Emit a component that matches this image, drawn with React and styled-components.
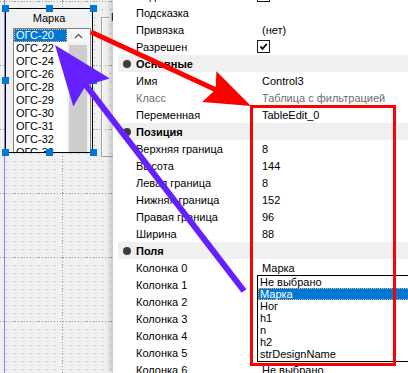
import React from 'react';
import styled, { createGlobalStyle } from 'styled-components';

const GlobalStyle = createGlobalStyle`
html, body {
  margin: 0;
  padding: 0;
}
body {
  width: 408px;
  height: 373px;
  overflow: hidden;
  background: #fff;
  color: #000;
  font-family: 'Liberation Sans', Arial, sans-serif;
  font-size: 11px;
}
`;

const marka = ['ОГС-20', 'ОГС-22', 'ОГС-24', 'ОГС-26', 'ОГС-28', 'ОГС-29', 'ОГС-30', 'ОГС-31', 'ОГС-32', 'ОГС-33'];

const props = [
  { label: 'Видимый', check: true },
  { label: 'Подсказка' },
  { label: 'Привязка', value: '(нет)' },
  { label: 'Разрешен', check: true },
  { section: 'Основные' },
  { label: 'Имя', value: 'Control3' },
  { label: 'Класс', value: 'Таблица с фильтрацией', muted: true },
  { label: 'Переменная', value: 'TableEdit_0' },
  { section: 'Позиция' },
  { label: 'Верхняя граница', value: '8' },
  { label: 'Высота', value: '144' },
  { label: 'Левая граница', value: '8' },
  { label: 'Нижняя граница', value: '152' },
  { label: 'Правая граница', value: '96' },
  { label: 'Ширина', value: '88' },
  { section: 'Поля' },
  { label: 'Колонка 0', value: 'Марка' },
  { label: 'Колонка 1' },
  { label: 'Колонка 2' },
  { label: 'Колонка 3' },
  { label: 'Колонка 4' },
  { label: 'Колонка 5' },
  { label: 'Колонка 6', value: 'Не выбрано' },
];

const fields = ['Не выбрано', 'Марка', 'Ног', 'h1', 'n', 'h2', 'strDesignName'];

// handle centres on the form, relative to its left edge
const handles = [
  [-3, 5], [41, 5], [85, 5],
  [-3, 77], [85, 77],
  [-3, 149], [41, 149], [85, 149],
];

const arrowPoints = ([sx, sy], [tx, ty], w, hl, hw, notch) => {
  const len = Math.hypot(tx - sx, ty - sy);
  const ux = (tx - sx) / len;
  const uy = (ty - sy) / len;
  const nx = -uy;
  const ny = ux;
  const bx = tx - hl * ux;
  const by = ty - hl * uy;
  const jx = bx + notch * ux;
  const jy = by + notch * uy;
  const pts = [
    [sx + (nx * w) / 2, sy + (ny * w) / 2],
    [jx + (nx * w) / 2, jy + (ny * w) / 2],
    [bx + nx * hw, by + ny * hw],
    [tx, ty],
    [bx - nx * hw, by - ny * hw],
    [jx - (nx * w) / 2, jy - (ny * w) / 2],
    [sx - (nx * w) / 2, sy - (ny * w) / 2],
  ];
  return pts.map((p) => p.map((v) => v.toFixed(1)).join(',')).join(' ');
};

const App = () => (
  <>
    <GlobalStyle />
    <Screen>
      <Canvas>
        <Form>
          <GroupBox>
            <GroupCaption>Р</GroupCaption>
          </GroupBox>
          <ListControl>
            <Caption>Марка</Caption>
            <ListBox>
              <Items>
                {marka.map((m, i) => (
                  <Item key={m} selected={i === 0}>
                    {m}
                  </Item>
                ))}
              </Items>
              <ScrollBar>
                <ScrollButton>
                  <svg width="9" height="6" viewBox="0 0 9 6">
                    <path d="M1 5 L4.5 1.5 L8 5" fill="none" stroke="#606060" strokeWidth="1.4" />
                  </svg>
                </ScrollButton>
                <Thumb />
              </ScrollBar>
            </ListBox>
          </ListControl>
          {handles.map(([x, y]) => (
            <Handle key={`${x}-${y}`} style={{ left: x, top: y }} />
          ))}
        </Form>
      </Canvas>

      <Panel>
        <Rows>
          {props.map((p, i) =>
            p.section ? (
              <Section key={i}>
                <Bullet />
                {p.section}
              </Section>
            ) : (
              <Row key={i}>
                <Label muted={p.muted}>{p.label}</Label>
                <Value muted={p.muted}>
                  {p.check ? (
                    <CheckBox>
                      <svg width="11" height="11" viewBox="0 0 11 11">
                        <path d="M2.5 5.5 L4.5 7.8 L8.8 3" fill="none" stroke="#000" strokeWidth="1.8" />
                      </svg>
                    </CheckBox>
                  ) : (
                    p.value
                  )}
                </Value>
              </Row>
            )
          )}
        </Rows>
      </Panel>

      <DropList>
        {fields.map((f, i) => (
          <DropItem key={f} selected={i === 1}>
            {f}
          </DropItem>
        ))}
      </DropList>

      <Highlight />

      <Arrows width="408" height="373" viewBox="0 0 408 373">
        <polygon points={arrowPoints([244, 291], [55, 45], 6, 60, 23, 8)} fill="#6420ff" />
        <polygon points={arrowPoints([91, 32], [251, 106], 5, 46, 17, 6)} fill="#ff0000" />
      </Arrows>
    </Screen>
  </>
);

const Screen = styled.div`
  position: relative;
  display: flex;
  width: 408px;
  height: 373px;
  overflow: hidden;
`;

const Canvas = styled.div`
  flex: 0 0 113px;
  display: flex;
  background-color: #f0f0f0;
  background-image:
    conic-gradient(from 270deg at 1px 1px, #9c9c9c 25%, transparent 0),
    conic-gradient(from 270deg at 1px 1px, #9c9c9c 25%, transparent 0),
    conic-gradient(from 270deg at 1px 1px, #9c9c9c 25%, transparent 0);
  background-size: 8px 8px, 64px 3px, 3px 64px;
  background-position: 6px 1px, 62px 0, 0 1px;
`;

const Form = styled.div`
  position: relative;
  flex: 1;
  margin-left: 4px;
  border-left: 1px solid #8080ff;
`;

const ListControl = styled.div`
  position: absolute;
  left: 0;
  top: 8px;
  width: 88px;
  height: 145px;
  box-sizing: border-box;
  border: 1px solid #000;
  background: #f0f0f0;
  display: flex;
  flex-direction: column;
`;

const Caption = styled.div`
  height: 19px;
  line-height: 19px;
  text-align: center;
`;

const ListBox = styled.div`
  flex: 1;
  display: flex;
  margin-left: 7px;
  width: 78px;
  box-sizing: border-box;
  border: 1px solid #828282;
  border-bottom: none;
  background: #fff;
  overflow: hidden;
`;

const Items = styled.div`
  flex: 1;
  min-width: 0;
`;

const Item = styled.div`
  height: 13px;
  line-height: 13px;
  padding-left: 2px;
  white-space: nowrap;
  background: ${({ selected }) => (selected ? '#0078d7' : 'transparent')};
  color: ${({ selected }) => (selected ? '#fff' : '#000')};
  outline: ${({ selected }) => (selected ? '1px dotted #ffb060' : 'none')};
  outline-offset: -1px;
`;

const ScrollBar = styled.div`
  width: 22px;
  margin-right: 1px;
  display: flex;
  flex-direction: column;
  background: #f0f0f0;
`;

const ScrollButton = styled.div`
  height: 13px;
  display: flex;
  align-items: center;
  justify-content: center;
  background: #f7f7f7;
`;

const Thumb = styled.div`
  flex: 1;
  margin: 3px 2px 0;
  background: #cdcdcd;
`;

const Handle = styled.div`
  position: absolute;
  width: 7px;
  height: 7px;
  background: #0078d7;
`;

const GroupBox = styled.div`
  position: absolute;
  left: 96px;
  top: 17px;
  width: 40px;
  height: 138px;
  border-left: 1px solid #a0a0a0;
  border-top: 1px solid #a0a0a0;
  border-bottom: 1px solid #a0a0a0;
  box-shadow: inset 1px 1px 0 #fff;
`;

const GroupCaption = styled.span`
  position: absolute;
  left: 7px;
  top: -7px;
  padding: 0 2px;
  line-height: 13px;
  background: #f0f0f0;
`;

const Panel = styled.div`
  position: relative;
  z-index: 1;
  flex: 1;
  padding-left: 5px;
  background: #fff;
  box-shadow: -3px 0 5px rgba(0, 0, 0, 0.18);
  overflow: hidden;
`;

const Rows = styled.div`
  margin-top: -13px;
`;

const Row = styled.div`
  display: grid;
  grid-template-columns: 139px 1fr;
  align-items: center;
  height: 17px;
`;

const Label = styled.div`
  padding-left: 18px;
  white-space: nowrap;
  color: ${({ muted }) => (muted ? '#6d6d6d' : '#000')};
`;

const Value = styled.div`
  padding-left: 5px;
  white-space: nowrap;
  color: ${({ muted }) => (muted ? '#6d6d6d' : '#000')};
`;

const CheckBox = styled.div`
  width: 13px;
  height: 13px;
  margin-left: -5px;
  box-sizing: border-box;
  border: 1px solid #1a1a1a;
  background: #fff;
  display: flex;
  align-items: center;
  justify-content: center;
`;

const Section = styled.div`
  display: flex;
  align-items: center;
  gap: 5px;
  height: 17px;
  padding-left: 5px;
  background: #f0f0f0;
  font-weight: bold;
`;

const Bullet = styled.span`
  width: 8px;
  height: 8px;
  border-radius: 50%;
  background: #3c3c3c;
`;

const DropList = styled.div`
  position: absolute;
  z-index: 2;
  left: 257px;
  top: 275px;
  width: 170px;
  height: 87px;
  box-sizing: border-box;
  border: 1px solid #000;
  background: #fff;
`;

const DropItem = styled.div`
  height: 12px;
  line-height: 12px;
  padding-left: 2px;
  white-space: nowrap;
  background: ${({ selected }) => (selected ? '#0078d7' : 'transparent')};
  color: ${({ selected }) => (selected ? '#fff' : '#000')};
  outline: ${({ selected }) => (selected ? '1px dotted #ffb060' : 'none')};
  outline-offset: -1px;
`;

const Highlight = styled.div`
  position: absolute;
  z-index: 3;
  left: 250px;
  top: 105px;
  width: 146px;
  height: 261px;
  box-sizing: border-box;
  border: 3px solid #ff0000;
`;

const Arrows = styled.svg`
  position: absolute;
  z-index: 4;
  left: 0;
  top: 0;
  pointer-events: none;
`;

export default App;
